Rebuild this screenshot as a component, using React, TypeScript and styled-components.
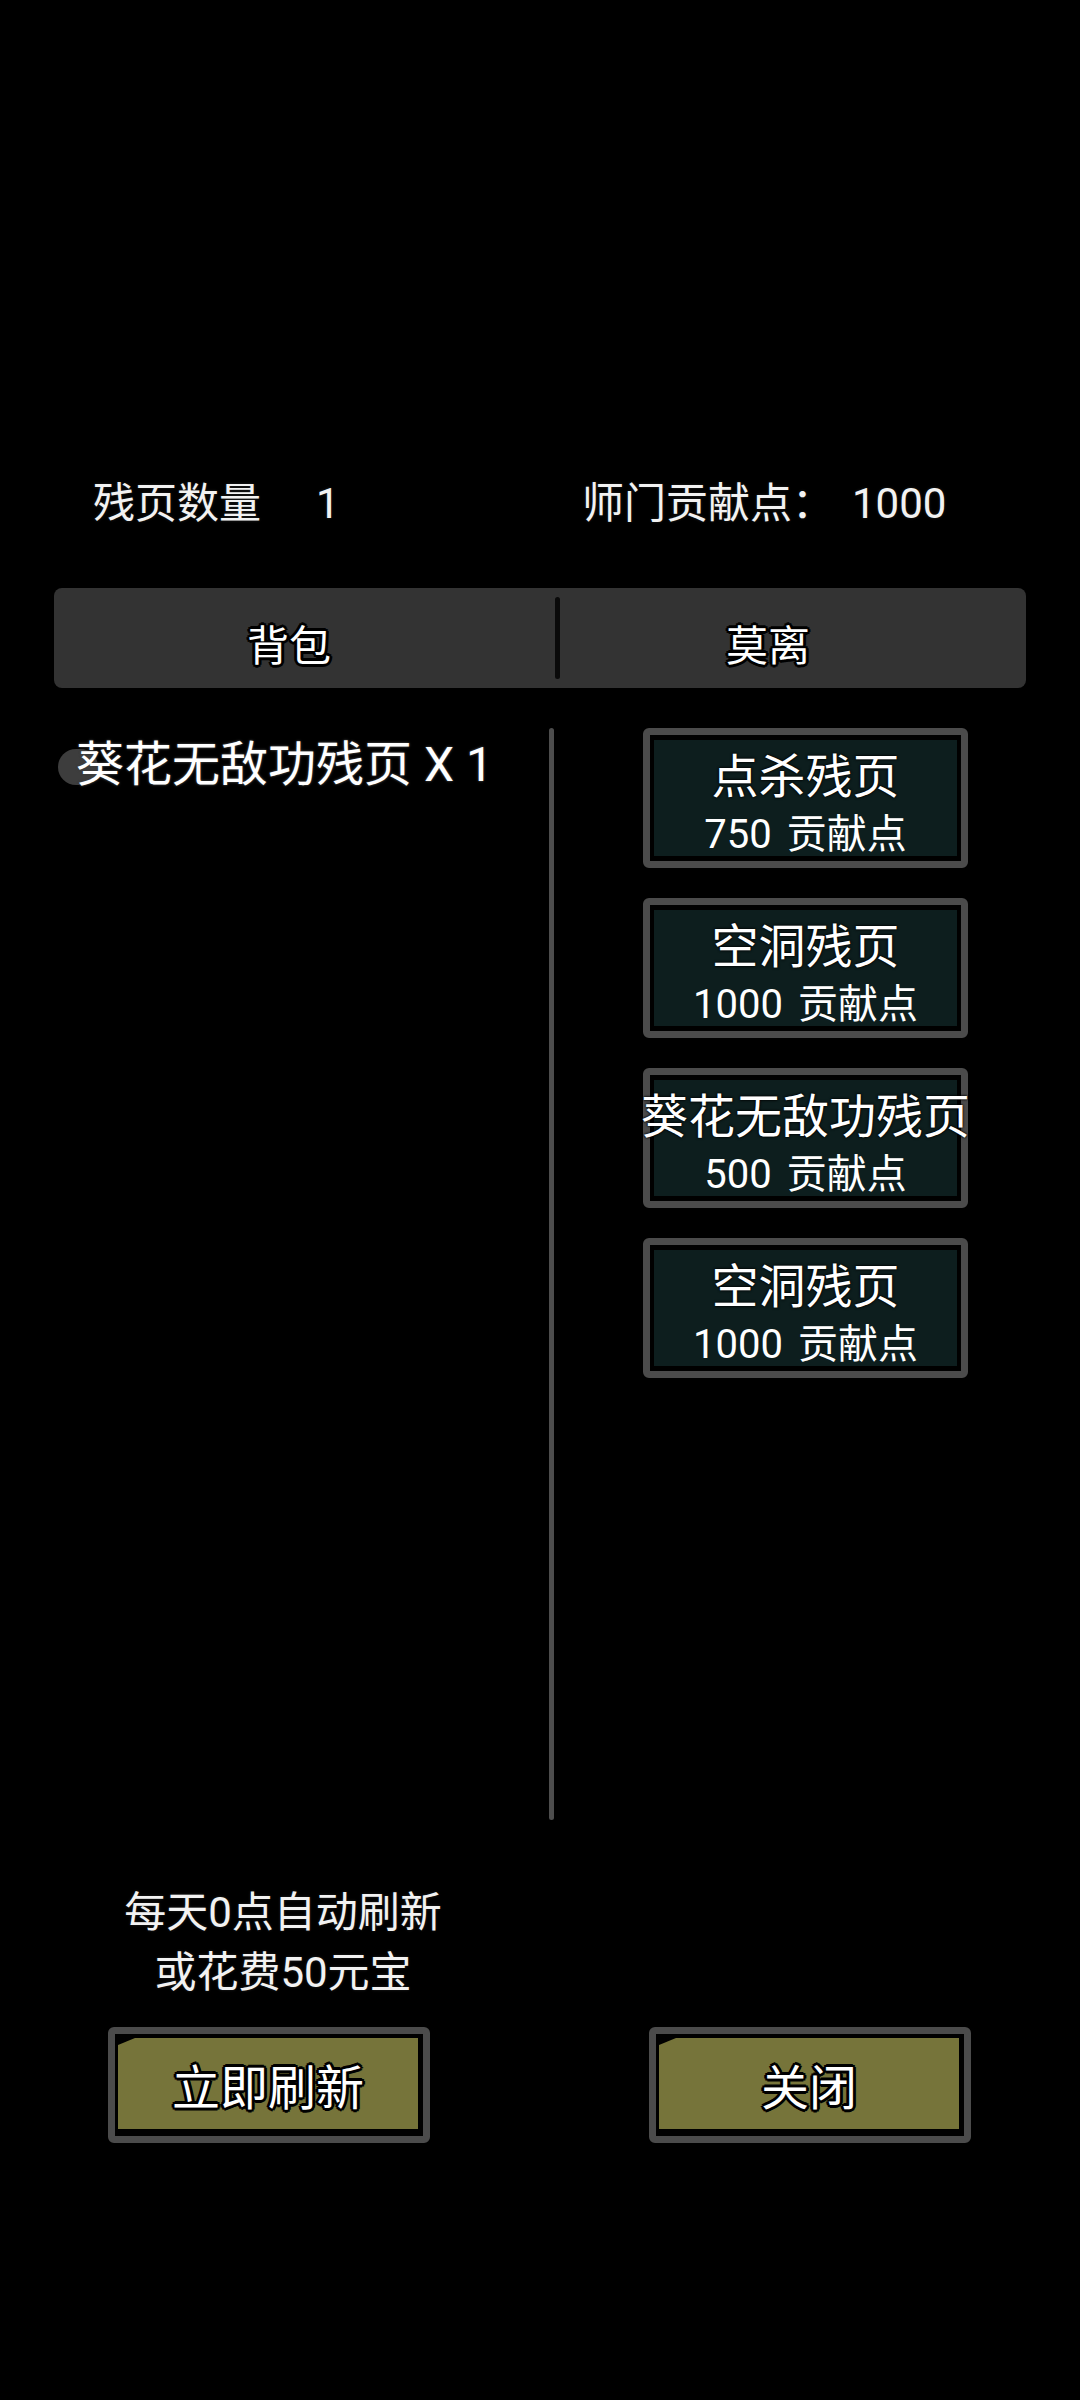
import React from "react";
import styled, { createGlobalStyle } from "styled-components";

const GlobalStyle = createGlobalStyle`
  html, body {
    margin: 0;
    padding: 0;
    background: #000;
  }
  body {
    font-family: Roboto, "Noto Sans CJK SC", "Noto Sans", sans-serif;
    color: #fff;
  }
`;

interface ShopItem {
  title: string;
  cost: number;
}

const shopItems: ShopItem[] = [
  { title: "点杀残页", cost: 750 },
  { title: "空洞残页", cost: 1000 },
  { title: "葵花无敌功残页", cost: 500 },
  { title: "空洞残页", cost: 1000 },
];

const outline =
  "2px 2px 0 #000, -2px -2px 0 #000, 2px -2px 0 #000, -2px 2px 0 #000, 0 3px 0 #000, 3px 0 0 #000, 0 -3px 0 #000, -3px 0 0 #000";

const App: React.FC = () => {
  return (
    <Page>
      <GlobalStyle />
      <Header>
        <Stat>
          残页数量<StatValue $gap={55}>1</StatValue>
        </Stat>
        <Stat>
          师门贡献点：<StatValue $gap={18}>1000</StatValue>
        </Stat>
      </Header>

      <Tabs>
        <Tab $shift={31}>背包</Tab>
        <TabDivider />
        <Tab $shift={50}>莫离</Tab>
      </Tabs>

      <Content>
        <Bag>
          <BagRow>
            <BagBadge />
            <BagLabel>葵花无敌功残页 X 1</BagLabel>
          </BagRow>
        </Bag>
        <ColumnDivider />
        <Shop>
          {shopItems.map((item, i) => (
            <ShopButton key={i}>
              <ShopFace>
                <ShopTitle>{item.title}</ShopTitle>
                <ShopCost>
                  <CostValue>{item.cost}</CostValue> 贡献点
                </ShopCost>
              </ShopFace>
            </ShopButton>
          ))}
        </Shop>
      </Content>

      <Footer>
        <FooterNote>
          每天0点自动刷新
          <br />
          或花费50元宝
        </FooterNote>
        <Actions>
          <ActionButton>
            <ActionFace>立即刷新</ActionFace>
          </ActionButton>
          <ActionButton>
            <ActionFace>关闭</ActionFace>
          </ActionButton>
        </Actions>
      </Footer>
    </Page>
  );
};

export default App;

const Page = styled.div`
  width: 1080px;
  height: 2400px;
  background: #000;
  display: flex;
  flex-direction: column;
  padding-top: 479px;
  box-sizing: border-box;
  overflow: hidden;
`;

const Header = styled.div`
  display: grid;
  grid-template-columns: 489px auto;
  padding-left: 93px;
  height: 50px;
`;

const Stat = styled.div`
  font-size: 42px;
  line-height: 50px;
  color: #f2f2f2;
  white-space: nowrap;
  text-shadow: 0 0 3px #222;
`;

const StatValue = styled.span<{ $gap: number }>`
  margin-left: ${({ $gap }) => $gap}px;
`;

const Tabs = styled.div`
  margin: 59px 54px 0;
  height: 100px;
  background: #333333;
  border-radius: 8px;
  display: grid;
  grid-template-columns: 501px 5px 1fr;
`;

const Tab = styled.div<{ $shift: number }>`
  display: flex;
  align-items: center;
  justify-content: center;
  padding-right: ${({ $shift }) => $shift}px;
  padding-top: 9px;
  box-sizing: border-box;
  font-size: 42px;
  color: #fff;
  text-shadow: ${outline};
`;

const TabDivider = styled.div`
  margin: 9px 0;
  background: #0a0a0a;
  border-radius: 3px;
`;

const Content = styled.div`
  margin-top: 40px;
  height: 1092px;
  display: flex;
`;

const Bag = styled.div`
  width: 549px;
  padding-top: 7px;
  box-sizing: border-box;
`;

const BagRow = styled.div`
  display: flex;
  align-items: center;
  padding-left: 58px;
  height: 60px;
`;

const BagBadge = styled.div`
  width: 40px;
  height: 36px;
  border-radius: 18px;
  background: #3d3d3d;
  flex-shrink: 0;
  margin-top: 4px;
`;

const BagLabel = styled.div`
  margin-left: -22px;
  font-size: 48px;
  line-height: 60px;
  color: #fff;
  white-space: nowrap;
  text-shadow: 0 0 3px #444, 0 0 2px #333;
`;

const ColumnDivider = styled.div`
  width: 5px;
  background: #4d4d4d;
  border-radius: 3px;
`;

const Shop = styled.div`
  flex: 1;
  display: flex;
  flex-direction: column;
  align-items: flex-start;
  gap: 30px;
  padding-left: 89px;
`;

const ShopButton = styled.div`
  width: 325px;
  height: 140px;
  box-sizing: border-box;
  border: 7px solid #4b4b4b;
  border-radius: 6px;
  background: #000;
  padding: 5px 4px;
  display: flex;
`;

const ShopFace = styled.div`
  flex: 1;
  min-width: 0;
  background: #0d1e1e;
  display: flex;
  flex-direction: column;
  align-items: center;
  justify-content: center;
  padding-top: 16px;
  box-sizing: border-box;
`;

const ShopTitle = styled.div`
  font-size: 47px;
  line-height: 58px;
  white-space: nowrap;
  color: #fff;
  text-shadow: 0 0 3px #000, 0 0 2px #000;
`;

const ShopCost = styled.div`
  font-size: 40px;
  line-height: 58px;
  white-space: nowrap;
  color: #fff;
`;

const CostValue = styled.span`
  margin-right: 5px;
`;

const Footer = styled.div`
  margin-top: 63px;
  display: flex;
  flex-direction: column;
`;

const FooterNote = styled.div`
  width: 566px;
  text-align: center;
  font-size: 42px;
  line-height: 60px;
  color: #f2f2f2;
  text-shadow: 0 0 3px #222;
`;

const Actions = styled.div`
  margin-top: 24px;
  display: flex;
  gap: 219px;
  padding-left: 108px;
`;

const ActionButton = styled.div`
  width: 322px;
  height: 116px;
  box-sizing: border-box;
  border: 7px solid #4b4b4b;
  border-radius: 6px;
  background: #000;
  padding: 4px 5px 7px 3px;
  display: flex;
`;

const ActionFace = styled.div`
  flex: 1;
  background: #76743a;
  clip-path: polygon(17px 0, 100% 0, 100% 100%, 0 100%, 0 7px);
  display: flex;
  align-items: center;
  justify-content: center;
  font-size: 48px;
  color: #fff;
  text-shadow: ${outline};
`;
